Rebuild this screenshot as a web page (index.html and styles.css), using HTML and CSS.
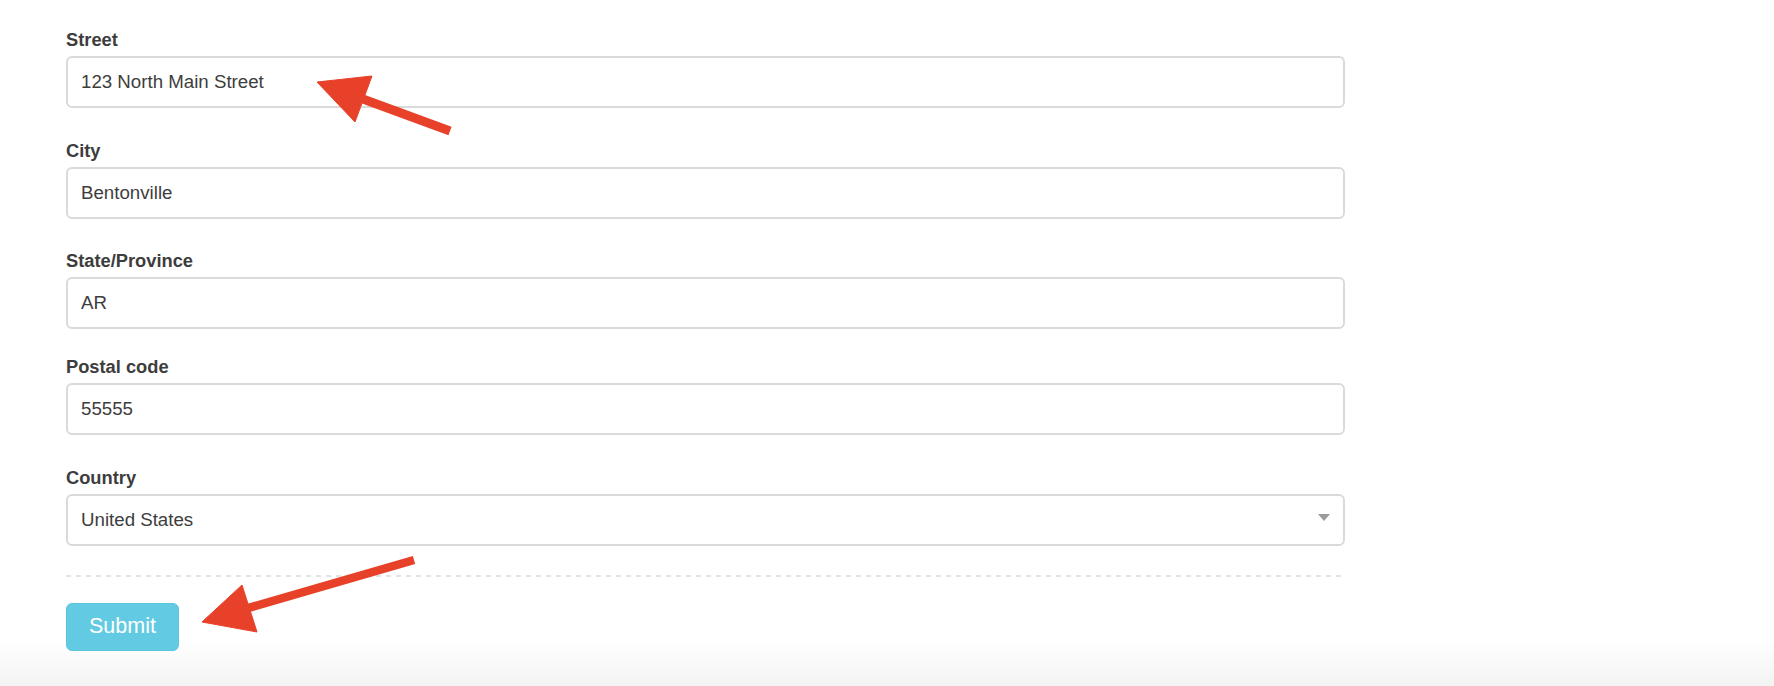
FILE: index.html
```html
<!DOCTYPE html>
<html lang="en">
<head>
  <meta charset="UTF-8" />
  <meta name="viewport" content="width=device-width, initial-scale=1.0" />
  <title>Address</title>
  <link rel="stylesheet" href="styles.css">
</head>
<body>
  <form class="adresse">
    <div class="groupe">
      <label for="street">Street</label>
      <input type="text" id="street" value="123 North Main Street" />
    </div>

    <div class="groupe">
      <label for="city">City</label>
      <input type="text" id="city" value="Bentonville" />
    </div>

    <div class="groupe serre">
      <label for="state">State/Province</label>
      <input type="text" id="state" value="AR" />
    </div>

    <div class="groupe">
      <label for="postal">Postal code</label>
      <input type="text" id="postal" value="55555" />
    </div>

    <div class="groupe">
      <label for="country">Country</label>
      <div class="choix">
        <select id="country">
          <option>United States</option>
          <option>Canada</option>
          <option>Mexico</option>
        </select>
      </div>
    </div>

    <div class="separateur"></div>

    <button type="submit" class="envoyer">Submit</button>
  </form>

  <!-- flèches d'annotation par-dessus le formulaire -->
  <svg class="fleches" width="1774" height="686" viewBox="0 0 1774 686">
    <g fill="#e8412a" stroke="#e8412a">
      <line x1="450" y1="131" x2="352" y2="95" stroke-width="9" />
      <polygon points="317,82 372,76 355,122" stroke-width="1" />
      <line x1="414" y1="560" x2="238" y2="611" stroke-width="8.5" />
      <polygon points="202,622 242,585 257,632" stroke-width="1" />
    </g>
  </svg>
</body>
</html>
```

FILE: styles.css
```css
body {
  margin: 0;
  padding: 0;
  min-height: 100vh;
  font-family: 'Liberation Sans', Arial, sans-serif;
  color: #333;
  background: linear-gradient(to bottom, #fff calc(100% - 46px), #f3f3f3);
  position: relative;
}

.adresse {
  width: 1279px;
  padding: 27px 0 0 66px;
}

.groupe {
  margin-bottom: 29.5px;
}

.groupe.serre {
  margin-bottom: 25px;
}

label {
  display: block;
  font-size: 18.3px;
  line-height: 25px;
  font-weight: bold;
  color: #3d3d3d;
  margin-bottom: 4px;
}

input[type="text"], select {
  display: block;
  box-sizing: border-box;
  width: 100%;
  height: 52px;
  padding: 0 13px;
  border: 2px solid #dadada;
  border-radius: 6px;
  background: #fff;
  font-family: inherit;
  font-size: 18.7px;
  color: #3d3d3d;
  outline: none;
}

select {
  appearance: none;
  -webkit-appearance: none;
}

.choix {
  position: relative;
}

.choix::after {
  content: "";
  position: absolute;
  right: 15px;
  top: 20px;
  border-left: 6px solid transparent;
  border-right: 6px solid transparent;
  border-top: 7px solid #9a9a9a;
}

.separateur {
  height: 2px;
  margin: 3px 0 25.5px;
  background: repeating-linear-gradient(to right, #e3e3e3 0 5px, transparent 5px 10px);
}

.envoyer {
  width: 113px;
  height: 48px;
  padding: 0;
  background-color: #62cbe3;
  color: #fff;
  border: 1px solid #5cc5de;
  border-radius: 6px;
  font-family: inherit;
  font-size: 21.5px;
  cursor: pointer;
}

.fleches {
  position: absolute;
  left: 0;
  top: 0;
  pointer-events: none;
}
```
